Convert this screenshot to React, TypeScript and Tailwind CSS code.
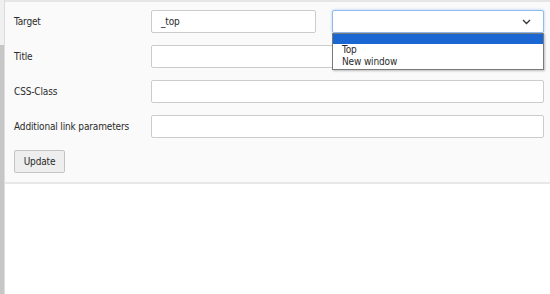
import React from 'react'

const fieldCls = 'h-[23px] bg-white border border-[#cccccc] rounded-[2px]'

function Row({ label, children }: { label: string; children: React.ReactNode }) {
  return (
    <div className="flex items-center">
      <div className="w-[137px] shrink-0 text-[#2b2b2b]">{label}</div>
      {children}
    </div>
  )
}

export default function App() {
  return (
    <div
      className="relative w-[550px] h-[294px] bg-white text-[10px] tracking-[-0.15px] overflow-hidden"
      style={{ fontFamily: '"DejaVu Sans Condensed", "Liberation Sans", sans-serif' }}
    >
      <div className="flex h-[294px]">
        {/* behind: left strip */}
        <div className="w-[4px] shrink-0 h-[294px] flex flex-col">
          <div className="h-[45px] bg-[#f0f0f0]" />
          <div className="h-[249px] bg-[#c6c6c6]" />
        </div>
        <div className="w-[1px] shrink-0 bg-[#dcdcdc]" />
        <div className="flex-1 min-w-0 flex flex-col">
          <div className="h-[2px] bg-[#e6e6e6]" />
          <div className="bg-[#fafafa] border-b-2 border-[#e8e8e8] pl-[9px] pr-[6px] pt-[8px] pb-[9px] flex flex-col gap-[12px]">
            <Row label="Target">
              <div className={`${fieldCls} w-[165px] shrink-0 flex items-center pl-[9px] text-[#2b2b2b]`}>_top</div>
              <div className="relative ml-[16px] flex-1">
                <div className="h-[23px] bg-white border border-[#8fbaec] rounded-[2px] shadow-[0_0_3px_#a9cdf3] flex items-center justify-end pr-[12px]">
                  <svg width="9" height="6" viewBox="0 0 9 6" fill="none">
                    <path d="M1 1l3.5 3.5L8 1" stroke="#333" strokeWidth="1.3" />
                  </svg>
                </div>
                <div className="absolute left-0 right-0 top-[23px] bg-white border border-[#7a7a7a] shadow-[1px_1px_2px_rgba(0,0,0,0.25)] z-10">
                  <div className="h-[10px] bg-[#1a66d2]" />
                  <div className="pl-[9px] leading-[12px] text-[#2b2b2b]">Top</div>
                  <div className="pl-[9px] leading-[12px] text-[#2b2b2b] pb-[1px]">New window</div>
                </div>
              </div>
            </Row>
            <Row label="Title">
              <div className={`${fieldCls} flex-1`} />
            </Row>
            <Row label="CSS-Class">
              <div className={`${fieldCls} flex-1`} />
            </Row>
            <Row label="Additional link parameters">
              <div className={`${fieldCls} flex-1`} />
            </Row>
            <div>
              <button className="h-[23px] w-[51px] bg-[#eeeeee] border border-[#c4c4c4] rounded-[2px] text-[#2b2b2b]">
                Update
              </button>
            </div>
          </div>
          <div className="flex-1 bg-white" />
        </div>
      </div>
    </div>
  )
}
